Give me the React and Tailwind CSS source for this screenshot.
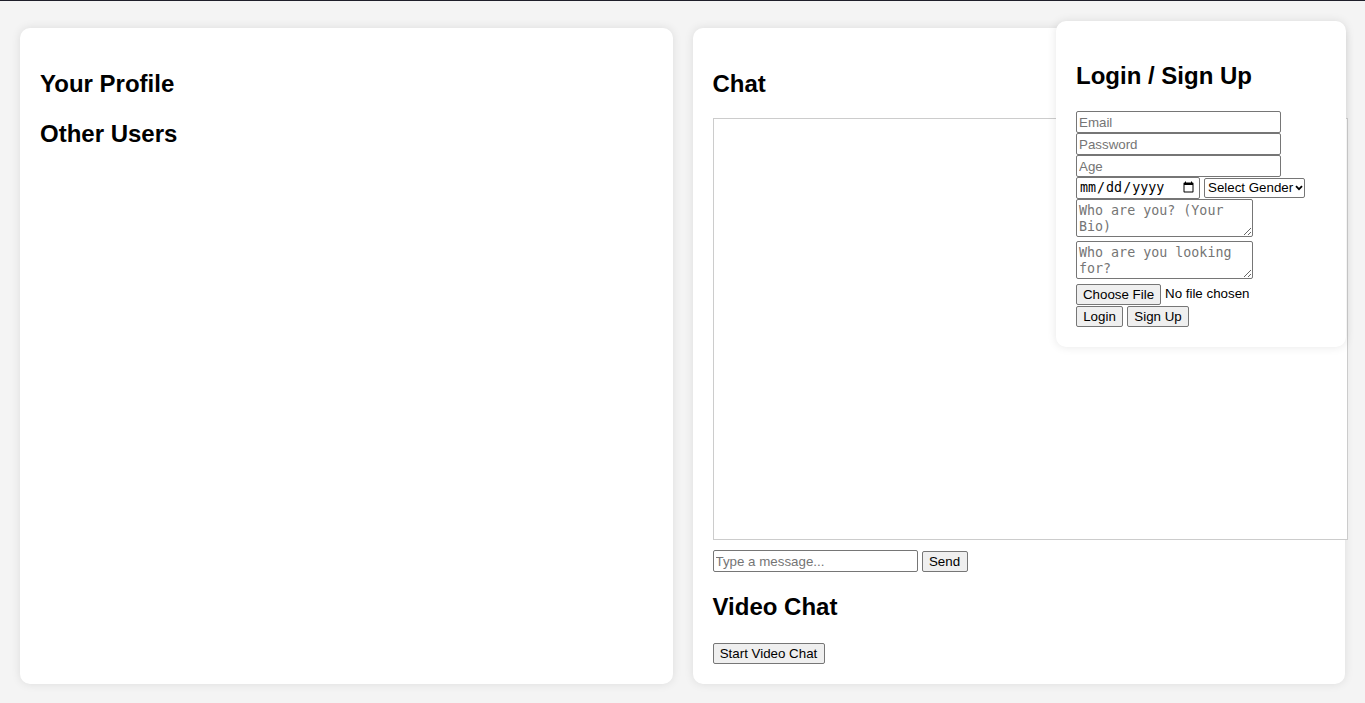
export default function App() {
  const inputCls =
    "block h-[22px] border border-[#767676] rounded-[2px] px-[2px] text-[13.33px] bg-white placeholder:text-[#757575]";
  const btnCls =
    "h-[21px] border border-[#767676] rounded-[2px] bg-[#efefef] text-[13.33px] leading-[17px] text-black whitespace-nowrap text-center";
  const h2Cls = "text-[24px] font-bold leading-[28px]";
  const areaCls =
    "block w-[177px] h-[38px] border border-[#767676] rounded-[2px] px-[2px] pt-[3px] text-[13.33px] leading-[16px] resize-y placeholder:text-[#757575]";
  const monoStyle = { fontFamily: '"DejaVu Sans Mono", monospace' };

  return (
    <div
      className="min-h-[703px] bg-[#f4f4f4] border-t border-[#1f1f2a] text-black relative"
      style={{ fontFamily: '"Liberation Sans", Arial, sans-serif' }}
    >
      <div className="flex gap-[20px] px-[20px] pt-[27px]">
        <div className="flex-1 min-w-0 bg-white rounded-[10px] shadow-[0_0_10px_rgba(0,0,0,0.1)] p-[20px]">
          <h2 className={h2Cls + " mt-[22px]"}>Your Profile</h2>
          <h2 className={h2Cls + " mt-[22px]"}>Other Users</h2>
        </div>

        <div className="flex-1 min-w-0 bg-white rounded-[10px] shadow-[0_0_10px_rgba(0,0,0,0.1)] p-[20px]">
          <h2 className={h2Cls + " mt-[22px]"}>Chat</h2>
          <div className="mt-[20px] w-[635px] h-[422px] border border-[#ccc] bg-white"></div>
          <div className="mt-[10px] flex items-center gap-[4px]">
            <input className={inputCls + " w-[205px]"} placeholder="Type a message..." />
            <button className={btnCls + " w-[46px]"}>Send</button>
          </div>
          <h2 className={h2Cls + " mt-[21px]"}>Video Chat</h2>
          <button className={btnCls + " mt-[22px] block w-[112px]"}>Start Video Chat</button>
        </div>
      </div>

      <div className="absolute top-[20px] right-[19px] w-[290px] bg-white rounded-[10px] shadow-[0_0_10px_rgba(0,0,0,0.1)] p-[20px]">
        <h2 className={h2Cls + " mt-[21px]"}>Login / Sign Up</h2>
        <div className="mt-[21px]">
          <input className={inputCls + " w-[205px]"} placeholder="Email" />
          <input className={inputCls + " w-[205px]"} type="password" placeholder="Password" />
          <input className={inputCls + " w-[205px]"} placeholder="Age" />
          <div className="flex items-center gap-[4px] h-[22px]">
            <input
              type="date"
              className="h-[22px] w-[124px] border border-[#767676] rounded-[2px] px-[2px] text-[13.33px] bg-white"
              style={monoStyle}
            />
            <div className="relative w-[101px] h-[20px]">
              <select className="block appearance-none w-full h-full border border-[#767676] rounded-[2px] pl-[3px] pr-[10px] text-[13.33px] leading-[18px] bg-white">
                <option>Select Gender</option>
                <option>Male</option>
                <option>Female</option>
              </select>
              <svg
                className="absolute right-[2px] top-[7px] pointer-events-none"
                width="8"
                height="6"
                viewBox="0 0 8 6"
              >
                <path d="M1 1.2 L4 4.2 L7 1.2" fill="none" stroke="#000" strokeWidth="1.8" />
              </svg>
            </div>
          </div>
          <textarea className={areaCls} style={monoStyle} placeholder="Who are you? (Your Bio)"></textarea>
          <textarea
            className={areaCls + " mt-[4px]"}
            style={monoStyle}
            placeholder="Who are you looking for?"
          ></textarea>
          <div className="mt-[4px] flex items-center h-[22px] gap-[4px] text-[13.33px]">
            <button className={btnCls + " w-[85px]"}>Choose File</button>
            <span>No file chosen</span>
          </div>
          <div className="flex items-center h-[22px] gap-[4px]">
            <button className={btnCls + " w-[47px]"}>Login</button>
            <button className={btnCls + " w-[62px]"}>Sign Up</button>
          </div>
        </div>
      </div>
    </div>
  );
}
